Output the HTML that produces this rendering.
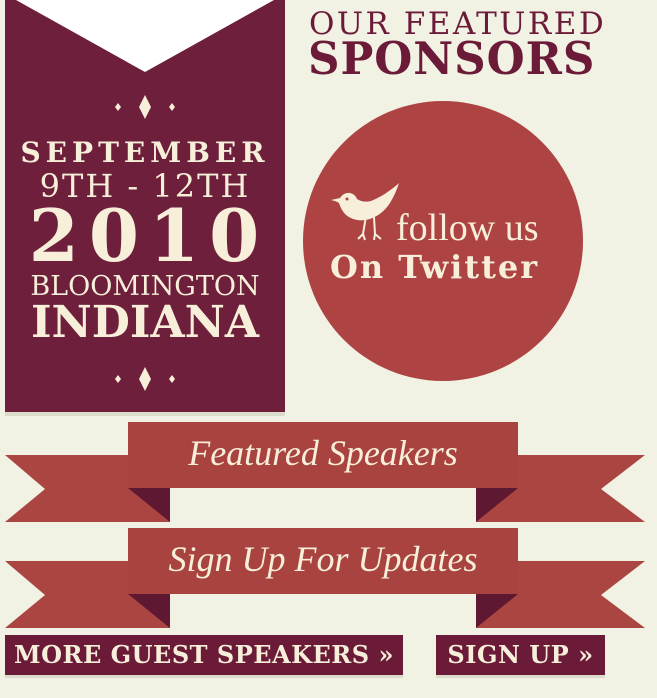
<!DOCTYPE html><html><head><style>
body{margin:0;width:657px;height:698px;background:#f2f2e4;position:relative;overflow:hidden;font-family:"DejaVu Serif","Liberation Serif",serif;}
.a{position:absolute;}
.c{color:#f7efd9;text-align:center;white-space:nowrap;}
</style></head><body>
<svg class="a" style="left:0;top:0" width="657" height="698">
<polygon points="5,0 285,0 285,412 5,412" fill="#6d1f3b"/>
<polygon points="16,0 274,0 145,72" fill="#ffffff"/>
<rect x="5" y="412" width="280" height="4" fill="#dcdccc"/>
<circle cx="443" cy="241" r="140" fill="#ad4342"/>
<g id="r1">
<polygon points="5,455 170,455 170,522 5,522 45,489" fill="#ab4541"/>
<polygon points="645,455 476,455 476,522 645,522 601,489" fill="#ab4541"/>
<polygon points="128,488 170,488 170,522" fill="#5e1831"/>
<polygon points="518,488 476,488 476,522" fill="#5e1831"/>
<rect x="128" y="422" width="390" height="66" fill="#a9433f"/>
</g>
<use href="#r1" y="106"/>
<rect x="5" y="635" width="398" height="40" fill="#6b1a38"/>
<rect x="436" y="635" width="169" height="40" fill="#6b1a38"/>
<rect x="5" y="675" width="398" height="3" fill="#dcdccc"/>
<rect x="436" y="675" width="169" height="3" fill="#dcdccc"/>
<g fill="#f7efd9">
<path d="M145,95 l6,12 l-6,12 l-6,-12z M118,103 l3,4 l-3,4 l-3,-4z M172,103 l3,4 l-3,4 l-3,-4z"/>
<path d="M145,367 l6,12 l-6,12 l-6,-12z M118,375 l3,4 l-3,4 l-3,-4z M172,375 l3,4 l-3,4 l-3,-4z"/>
<path d="M331,200 l9,-2 q4,-6 10,-5 q5,1 7,6 q6,4 14,2 q10,-4 18,-10 q7,-5 10,-8 q-3,10 -9,20 q-8,12 -20,16 q-14,4 -24,-4 q-5,-5 -7,-12 q-3,-2 -8,-3z"/>
<path d="M366,216 l-3,18 l-5,5 M363,234 l2,6 M374,217 l1,17 l6,5 M375,234 l-1,6" stroke="#f7efd9" stroke-width="2" fill="none"/>
</g>
<circle cx="347" cy="199" r="1.5" fill="#ad4342"/>
</svg>
<div class="a" style="left:309px;top:6px;font-size:31px;letter-spacing:2.5px;color:#6b1a38;white-space:nowrap">OUR FEATURED</div>
<div class="a" style="left:308px;top:32px;font-size:45px;font-weight:bold;letter-spacing:1px;color:#6b1a38;white-space:nowrap;transform:scaleX(0.97);transform-origin:left">SPONSORS</div>
<div class="a c" style="left:5px;width:280px;top:136px;font-size:28px;font-weight:bold;letter-spacing:5px">SEPTEMBER</div>
<div class="a c" style="left:5px;width:280px;top:167px;font-size:32px;letter-spacing:2px">9TH - 12TH</div>
<div class="a c" style="left:5px;width:280px;top:193px;font-size:72px;font-weight:bold;letter-spacing:10px;padding-left:8px;box-sizing:border-box">2010</div>
<div class="a c" style="left:5px;width:280px;top:271px;font-size:27px">BLOOMINGTON</div>
<div class="a c" style="left:5px;width:280px;top:297px;font-size:44px;font-weight:bold">INDIANA</div>
<div class="a c" style="left:396px;top:206px;font-size:38px;font-family:'Liberation Serif',serif">follow us</div>
<div class="a c" style="left:330px;top:248px;font-size:32px;font-weight:bold;letter-spacing:2px">On Twitter</div>
<div class="a c" style="left:128px;width:390px;top:432px;font-size:36px;font-style:italic;font-family:'Liberation Serif',serif">Featured Speakers</div>
<div class="a c" style="left:128px;width:390px;top:538px;font-size:36px;font-style:italic;font-family:'Liberation Serif',serif">Sign Up For Updates</div>
<div class="a c" style="left:5px;width:398px;top:640px;font-size:24px;font-weight:bold;letter-spacing:0.5px">MORE GUEST SPEAKERS »</div>
<div class="a c" style="left:436px;width:169px;top:640px;font-size:24px;font-weight:bold;letter-spacing:0.5px">SIGN UP »</div>
</body></html>
